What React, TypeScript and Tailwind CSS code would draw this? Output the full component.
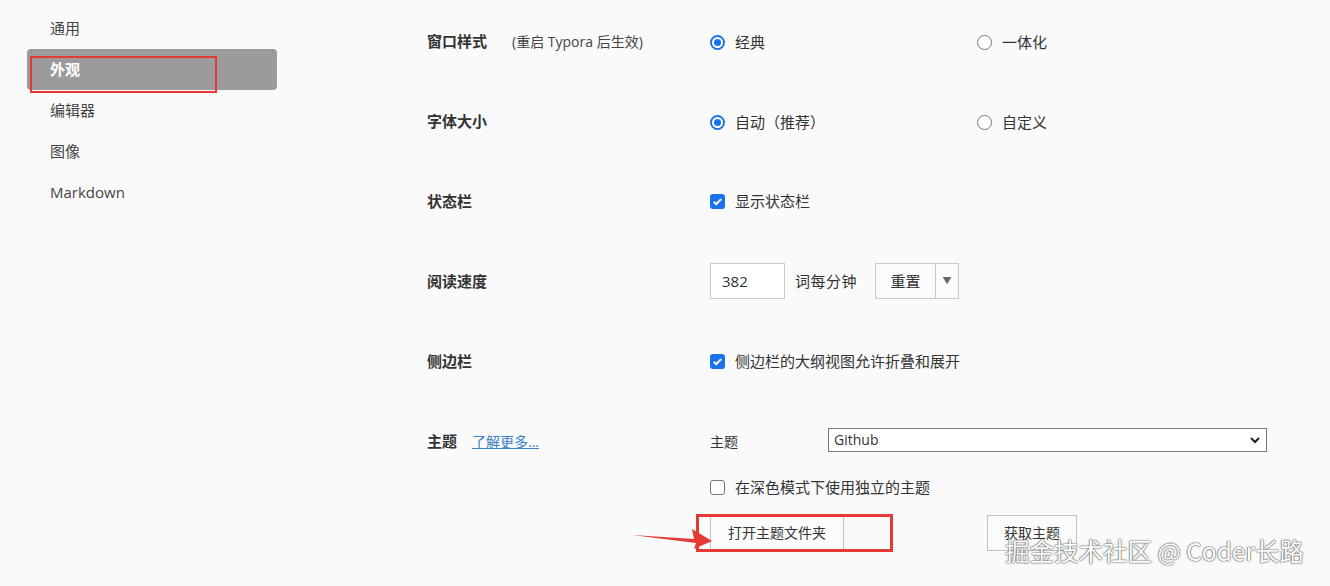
import React from "react";

const font = { fontFamily: '"Open Sans", "Noto Sans CJK SC", sans-serif' };

const navItems = ["通用", "外观", "编辑器", "图像", "Markdown"];

function Radio({ checked, label }: { checked?: boolean; label: string }) {
  return (
    <label className="flex items-center gap-[10px] text-[15px] text-[#333]">
      {checked ? (
        <span className="flex h-[15px] w-[15px] items-center justify-center rounded-full border-[2px] border-[#1a73e8] bg-white">
          <span className="h-[7px] w-[7px] rounded-full bg-[#1a73e8]" />
        </span>
      ) : (
        <span className="h-[15px] w-[15px] rounded-full border border-[#767676] bg-white" />
      )}
      {label}
    </label>
  );
}

function Checkbox({ checked, label }: { checked?: boolean; label: string }) {
  return (
    <label className="flex items-center gap-[10px] text-[15px] text-[#333]">
      {checked ? (
        <span className="flex h-[15px] w-[15px] items-center justify-center rounded-[3px] bg-[#1a73e8]">
          <svg viewBox="0 0 12 12" className="h-[11px] w-[11px]">
            <path d="M2 6.3l2.6 2.6L10 3.4" fill="none" stroke="#fff" strokeWidth="2.2" />
          </svg>
        </span>
      ) : (
        <span className="h-[15px] w-[15px] rounded-[3px] border border-[#767676] bg-white" />
      )}
      {label}
    </label>
  );
}

function Row({ label, children }: { label: React.ReactNode; children: React.ReactNode }) {
  return (
    <div className="flex h-[80px] items-center">
      <div className="w-[283px] text-[15px] font-bold text-[#333]">{label}</div>
      <div className="flex flex-1 items-center">{children}</div>
    </div>
  );
}

export default function App() {
  return (
    <div className="relative flex h-[586px] w-[1330px] overflow-hidden bg-[#fafafa]" style={font}>
      {/* sidebar */}
      <nav className="w-[427px] pt-[8px] pl-[27px]">
        {navItems.map((item) =>
          item === "外观" ? (
            <div
              key={item}
              className="relative flex h-[41px] w-[250px] items-center rounded-[4px] bg-[#9b9b9b] pl-[23px] text-[15px] font-bold text-white"
            >
              {item}
              <span className="absolute left-[3px] top-[7px] h-[37px] w-[187px] border-[2px] border-[#e53935]" />
            </div>
          ) : (
            <div key={item} className="flex h-[41px] items-center pl-[23px] text-[15px] text-[#444]">
              {item}
            </div>
          )
        )}
      </nav>

      {/* settings panel */}
      <main className="flex-1 pt-[1px]">
        <Row
          label={
            <span>
              窗口样式
              <span className="ml-[25px] text-[14px] font-normal text-[#444]">(重启 Typora 后生效)</span>
            </span>
          }
        >
          <div className="w-[267px] pt-[2px]">
            <Radio checked label="经典" />
          </div>
          <div className="pt-[2px]">
            <Radio label="一体化" />
          </div>
        </Row>
        <Row label="字体大小">
          <div className="w-[267px] pt-[2px]">
            <Radio checked label="自动（推荐）" />
          </div>
          <div className="pt-[2px]">
            <Radio label="自定义" />
          </div>
        </Row>
        <Row label="状态栏">
          <Checkbox checked label="显示状态栏" />
        </Row>
        <Row label="阅读速度">
          <div className="flex h-[36px] w-[75px] items-center border border-[#c9c9c9] bg-white pl-[11px] text-[15px] text-[#333]">
            382
          </div>
          <span className="ml-[10px] text-[15px] tracking-[0.5px] text-[#333]">词每分钟</span>
          <div className="ml-[18px] flex h-[36px] border border-[#c9c9c9] bg-[#fbfbfb]">
            <span className="flex w-[60px] items-center justify-center border-r border-[#c9c9c9] text-[15px] text-[#333]">
              重置
            </span>
            <span className="flex w-[22px] items-center justify-center text-[9px] text-[#666]">▼</span>
          </div>
        </Row>
        <Row label="侧边栏">
          <Checkbox checked label="侧边栏的大纲视图允许折叠和展开" />
        </Row>
        <Row
          label={
            <span>
              主题
              <span className="ml-[15px] text-[14px] font-normal text-[#3b7fc4] underline">了解更多...</span>
            </span>
          }
        >
          <span className="w-[118px] text-[14px] text-[#333]">主题</span>
          <div className="mb-[3px] flex h-[24px] w-[439px] items-center justify-between border border-[#777] bg-white pl-[5px] pr-[5px] text-[14px] text-[#333]">
            Github
            <svg viewBox="0 0 12 12" className="h-[12px] w-[12px]">
              <path d="M2 4l4 4 4-4" fill="none" stroke="#222" strokeWidth="2" />
            </svg>
          </div>
        </Row>

        <div className="ml-[283px] mt-[-5px]">
          <Checkbox label="在深色模式下使用独立的主题" />
        </div>

        <div className="ml-[283px] mt-[16px] flex items-center">
          <div className="relative">
            <button
              type="button"
              className="flex h-[34px] w-[134px] items-center justify-center border-x border-[#c2c2c2] bg-[#fbfbfb] text-[14px] text-[#333]"
            >
              打开主题文件夹
            </button>
            <span className="absolute left-[-14px] top-[-2px] h-[38px] w-[197px] border-[3px] border-[#e53935]" />
          </div>
          <button
            type="button"
            className="ml-[143px] flex h-[36px] w-[90px] items-center justify-center border border-[#c2c2c2] bg-[#fbfbfb] text-[14px] text-[#333]"
          >
            获取主题
          </button>
        </div>
      </main>

      {/* red pointer arrow */}
      <svg className="absolute left-[630px] top-[526px]" width="84" height="24" viewBox="0 0 84 24">
        <path d="M2 9 L64 13 L62 3 L82 15 L64 23 L66 17 Z" fill="#e53935" />
      </svg>

      {/* watermark */}
      <div
        className="absolute left-[1005px] top-[533px] text-[24.5px] text-white [text-shadow:0_0_2px_#444,0_0_1px_#444]"
        style={{ fontFamily: '"Noto Sans CJK SC", sans-serif' }}
      >
        掘金技术社区 @ Coder长路
      </div>
    </div>
  );
}
